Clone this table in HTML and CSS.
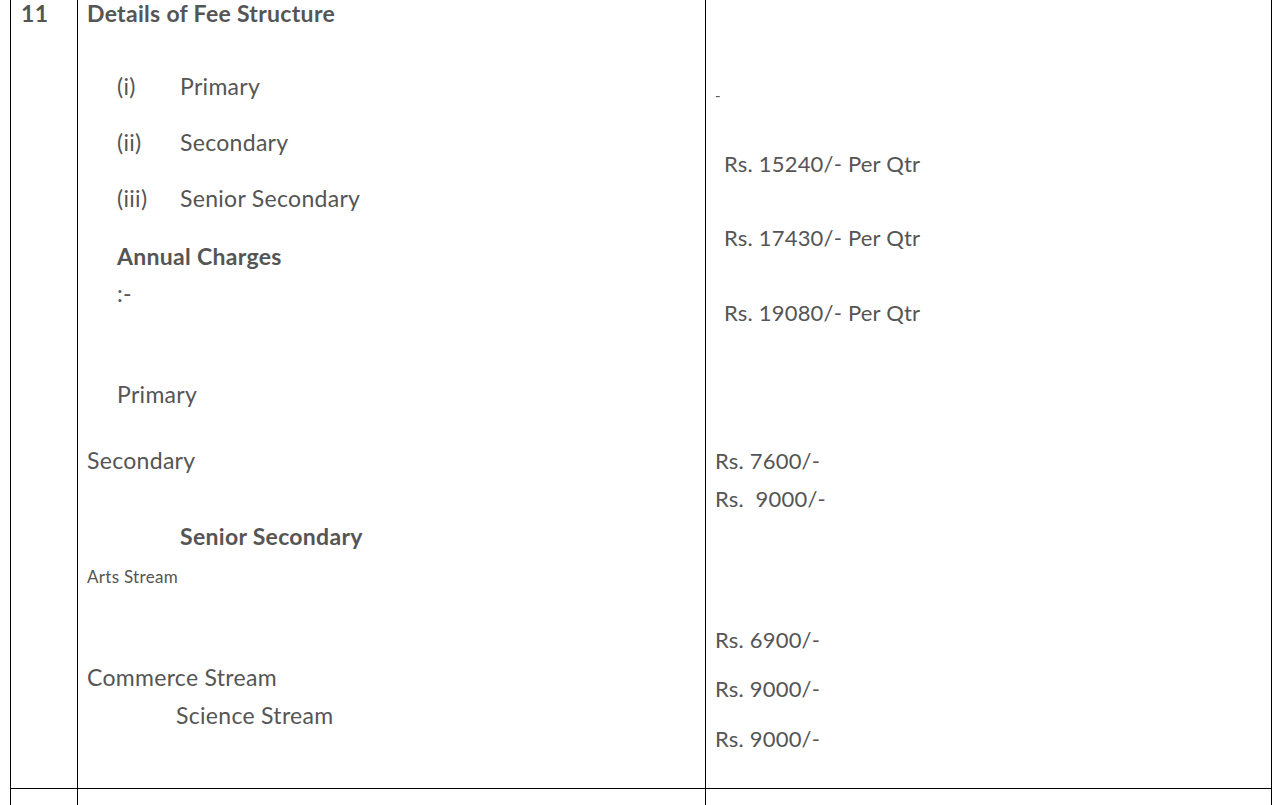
FILE: index.html
```html
<!DOCTYPE html>
<html lang="en">
<head>
<meta charset="utf-8">
<title>Details of Fee Structure</title>
<link rel="stylesheet" href="styles.css">
</head>
<body>
<div class="page">
  <table class="fees">
    <colgroup>
      <col class="c-no">
      <col class="c-desc">
      <col class="c-val">
    </colgroup>
    <tr class="row-main">
      <td class="no"><div class="line bold">11</div></td>
      <td class="desc">
        <div class="line bold">Details of Fee Structure</div>
        <div class="line item m-first"><span class="num">(i)</span><span>Primary</span></div>
        <div class="line item m-28"><span class="num">(ii)</span><span>Secondary</span></div>
        <div class="line item m-28"><span class="num">(iii)</span><span>Senior Secondary</span></div>
        <div class="line bold indent m-annual">Annual Charges</div>
        <div class="line indent m-colon">:-</div>
        <div class="line indent m-primary">Primary</div>
        <div class="line m-secondary">Secondary</div>
        <div class="line bold m-senior">Senior Secondary</div>
        <div class="line small m-arts">Arts Stream</div>
        <div class="line m-commerce">Commerce Stream</div>
        <div class="line m-science">Science Stream</div>
      </td>
      <td class="val">
        <div class="dash">-</div>
        <div class="line qtr m-q1">Rs. 15240/- Per Qtr</div>
        <div class="line qtr m-q">Rs. 17430/- Per Qtr</div>
        <div class="line qtr m-q2">Rs. 19080/- Per Qtr</div>
        <div class="line m-v1">Rs. 7600/-</div>
        <div class="line m-v2">Rs.&nbsp; 9000/-</div>
        <div class="line m-v3">Rs. 6900/-</div>
        <div class="line m-v4">Rs. 9000/-</div>
        <div class="line m-v5">Rs. 9000/-</div>
      </td>
    </tr>
    <tr class="row-next">
      <td></td>
      <td></td>
      <td></td>
    </tr>
  </table>
</div>
</body>
</html>
```

FILE: styles.css
```css
html, body {
  margin: 0;
  padding: 0;
  background: #ffffff;
}

body {
  font-family: Lato, "Open Sans", "Liberation Sans", sans-serif;
  color: #555555;
  font-size: 23px;
  letter-spacing: 0.3px;
}

.page {
  padding-left: 10px;
  overflow: hidden;
  height: 805px;
}

.fees {
  border-collapse: collapse;
  table-layout: fixed;
  width: 1261px;
  margin-top: -1px;
}

.c-no { width: 67px; }
.c-desc { width: 628px; }
.c-val { width: 566px; }

.fees td {
  border: 1px solid #000000;
  vertical-align: top;
  padding: 0 9px;
}

.row-main td {
  height: 789px;
  box-sizing: border-box;
}

.row-main .desc,
.row-main .no {
  padding-top: 0;
}

.desc > .line:first-child,
.no > .line:first-child {
  margin-top: -1px;
}

.row-next td {
  height: 40px;
}

.line {
  line-height: 28px;
  white-space: nowrap;
}

.bold { font-weight: 700; }

.no .line { padding-left: 1px; }

.item {
  display: flex;
  padding-left: 30px;
}

.item .num {
  width: 63px;
}

.indent { padding-left: 30px; }

.small { font-size: 17px; }

.m-first { margin-top: 45px; }
.m-28 { margin-top: 28px; }
.m-annual { margin-top: 30px; }
.m-colon { margin-top: 9px; }
.m-primary { margin-top: 73px; }
.m-secondary { margin-top: 38px; }
.m-senior { margin-top: 48px; padding-left: 93px; }
.m-arts { margin-top: 13px; }
.m-commerce { margin-top: 72px; }
.m-science { margin-top: 10px; padding-left: 89px; }

.val {
  font-size: 22px;
  letter-spacing: 0.2px;
}

.dash {
  font-size: 15px;
  line-height: 16px;
  margin-top: 87px;
}

.qtr { padding-left: 9px; }
.m-q1 { margin-top: 47px; }
.m-q { margin-top: 46px; }
.m-q2 { margin-top: 47px; }
.m-v1 { margin-top: 120px; }
.m-v2 { margin-top: 10px; }
.m-v3 { margin-top: 113px; }
.m-v4 { margin-top: 21px; }
.m-v5 { margin-top: 22px; }
```
